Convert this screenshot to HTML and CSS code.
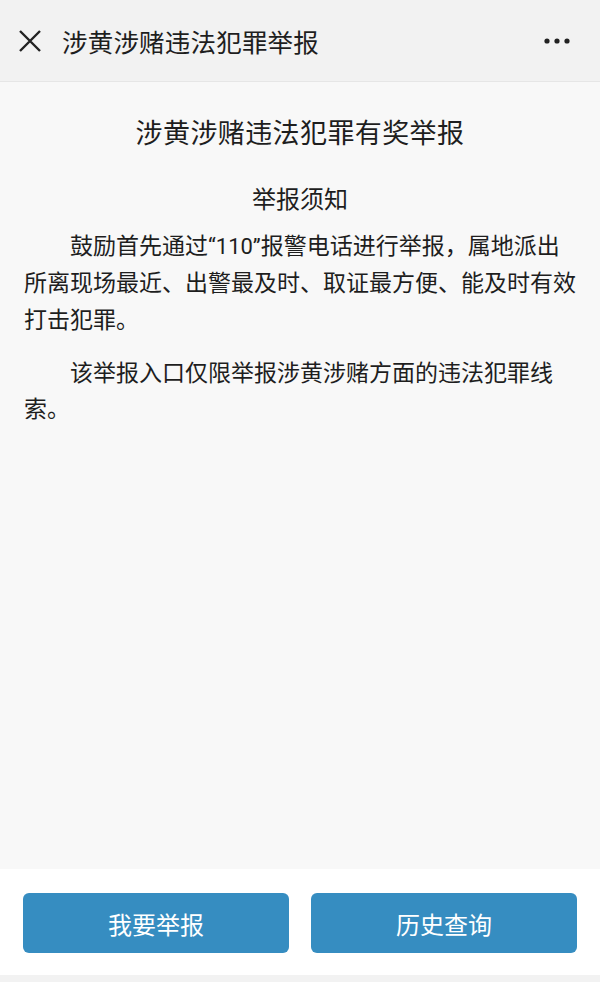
FILE: index.html
```html
<!DOCTYPE html>
<html lang="zh-CN">
<head>
  <meta charset="UTF-8" />
  <meta name="viewport" content="width=device-width, initial-scale=1" />
  <title>涉黄涉赌违法犯罪举报</title>
  <link rel="stylesheet" href="styles.css">
</head>
<body>
  <header class="topbar">
    <span class="close-btn" title="关闭">
      <svg width="24" height="24" viewBox="0 0 24 24">
        <path d="M2 2 L22 22 M22 2 L2 22" stroke="#222" stroke-width="2.4" fill="none" />
      </svg>
    </span>
    <div class="topbar-title">涉黄涉赌违法犯罪举报</div>
    <span class="more-btn" title="更多">
      <svg width="26" height="6" viewBox="0 0 26 6">
        <circle cx="3" cy="3" r="2.6" fill="#222" />
        <circle cx="13" cy="3" r="2.6" fill="#222" />
        <circle cx="23" cy="3" r="2.6" fill="#222" />
      </svg>
    </span>
  </header>

  <main class="content">
    <h1>涉黄涉赌违法犯罪有奖举报</h1>
    <h2>举报须知</h2>
    <p>鼓励首先通过<span class="latin">“110”</span>报警电话进行举报，属地派出<br>所离现场最近、出警最及时、取证最方便、能及时有效<br>打击犯罪。</p>
    <p>该举报入口仅限举报涉黄涉赌方面的违法犯罪线<br>索。</p>
  </main>

  <footer class="actions">
    <a href="#" class="action-button">我要举报</a>
    <a href="#" class="action-button">历史查询</a>
  </footer>
  <div class="bottom-strip"></div>
</body>
</html>
```

FILE: styles.css
```css
html, body {
  height: 100%;
}

body {
  margin: 0;
  padding: 0;
  font-family: 'Noto Sans CJK SC', 'Noto Sans', sans-serif;
  background: #f8f8f8;
  color: #1e1e1e;
  display: flex;
  flex-direction: column;
}

.topbar {
  height: 81px;
  background: #f2f2f2;
  border-bottom: 1px solid #e6e6e6;
  display: flex;
  align-items: center;
  padding: 0 30px 0 18px;
  box-sizing: content-box;
  flex: 0 0 auto;
}

.close-btn {
  width: 24px;
  height: 24px;
  display: flex;
  margin-top: 1px;
}

.topbar-title {
  flex: 1;
  margin-left: 20px;
  font-size: 25.5px;
  color: #1e1e1e;
  line-height: 1;
  letter-spacing: 0.2px;
}

.more-btn {
  display: flex;
  margin-top: 1px;
}

.content {
  flex: 1;
  padding: 0 24px;
}

h1 {
  font-size: 27px;
  font-weight: normal;
  text-align: center;
  line-height: 38px;
  margin: 31px 0 0 0;
  letter-spacing: 0.4px;
}

h2 {
  font-size: 24px;
  font-weight: normal;
  text-align: center;
  line-height: 37px;
  margin: 28px 0 0 0;
}

p {
  font-size: 23px;
  line-height: 37px;
  text-indent: 2em;
  margin: 10px -10px 0 0;
}

p + p {
  margin-top: 16px;
  line-height: 36px;
}

/* narrow quotes and digits like the original */
.latin {
  font-family: Roboto, 'Noto Sans', sans-serif;
  font-size: 22px;
  line-height: 1;
}

.actions {
  flex: 0 0 auto;
  background: #ffffff;
  display: flex;
  gap: 22px;
  padding: 24px 23px 22px 23px;
}

.action-button {
  flex: 1;
  height: 60px;
  background: #368dc1;
  border-radius: 6px;
  color: #ffffff;
  font-size: 24px;
  text-decoration: none;
  display: flex;
  align-items: center;
  justify-content: center;
}

.bottom-strip {
  height: 7px;
  background: #f2f2f2;
  flex: 0 0 auto;
}
```
